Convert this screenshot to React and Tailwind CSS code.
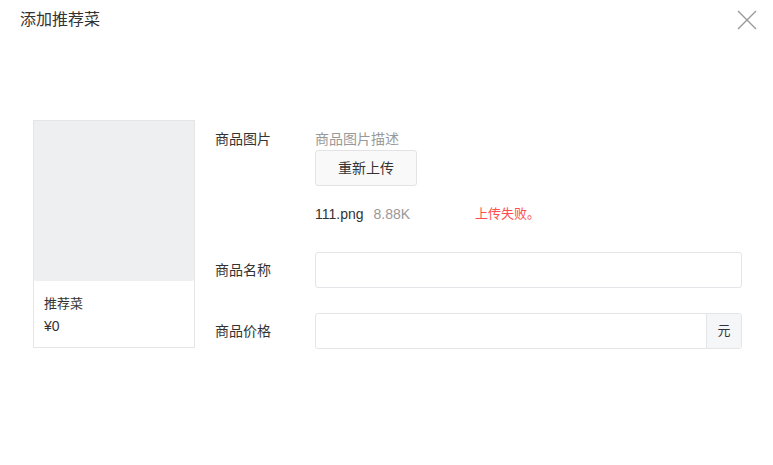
import React from 'react'

const font = { fontFamily: '"Liberation Sans", "Noto Sans CJK SC", sans-serif' }

const Field = ({ label, children }) => (
  <div className="flex items-center">
    <div className="w-[100px] text-[14px] text-[#333]">{label}</div>
    <div className="flex-1">{children}</div>
  </div>
)

export default function App() {
  return (
    <div
      className="w-[773px] h-[465px] bg-white relative text-[#333]"
      style={font}
    >
      {/* Header */}
      <div className="flex items-start justify-between pl-5 pr-[16px] pt-[9px]">
        <h2 className="text-[16px] leading-[22px] text-[#333]">添加推荐菜</h2>
        <button className="mt-[1px] w-[20px] h-[20px] text-[#999]">
          <svg viewBox="0 0 20 20" width="20" height="20" fill="none" stroke="currentColor" strokeWidth="1.4">
            <path d="M1 1L19 19M19 1L1 19" />
          </svg>
        </button>
      </div>

      {/* Body */}
      <div className="flex pl-[33px] pr-[31px] mt-[89px]">
        {/* Preview card */}
        <div className="w-[162px] h-[228px] border border-[#e5e5e5] shrink-0">
          <div className="h-[160px] bg-[#eeeff1] rounded-b-[2px]"></div>
          <div className="px-[10px] pt-[12px] leading-[22px] text-[#333]">
            <div className="text-[13px]">推荐菜</div>
            <div className="text-[14px]">¥0</div>
          </div>
        </div>

        {/* Form */}
        <div className="flex-1 ml-[20px] pt-[11px]">
          <div className="flex">
            <div className="w-[100px] text-[14px] leading-[16px] text-[#333]">商品图片</div>
            <div className="flex-1">
              <div className="text-[14px] leading-[16px] text-[#999]">商品图片描述</div>
              <button className="mt-[3px] w-[102px] h-[36px] border border-[#e3e3e3] rounded-[3px] bg-[#f9f9f9] text-[14px] text-[#333]">
                重新上传
              </button>
              <div className="mt-[18px] flex items-center text-[14px] leading-[20px]">
                <div className="w-[160px] flex">
                  <span className="text-[#333]">111.png</span>
                  <span className="ml-[10px] text-[#999]">8.88K</span>
                </div>
                <span className="text-[13px] text-[#ff4d4f]">上传失败。</span>
              </div>
            </div>
          </div>

          <div className="mt-[28px]">
            <Field label="商品名称">
              <input className="w-full h-[36px] border border-[#e3e5e8] rounded-[3px] outline-none px-3 text-[14px]" />
            </Field>
          </div>

          <div className="mt-[25px]">
            <Field label="商品价格">
              <div className="flex h-[36px] border border-[#e3e5e8] rounded-[3px] overflow-hidden">
                <input className="flex-1 min-w-0 outline-none px-3 text-[14px]" />
                <span className="w-[35px] border-l border-[#e3e5e8] bg-[#f5f6f8] flex items-center justify-center text-[13px] text-[#333]">
                  元
                </span>
              </div>
            </Field>
          </div>
        </div>
      </div>
    </div>
  )
}
